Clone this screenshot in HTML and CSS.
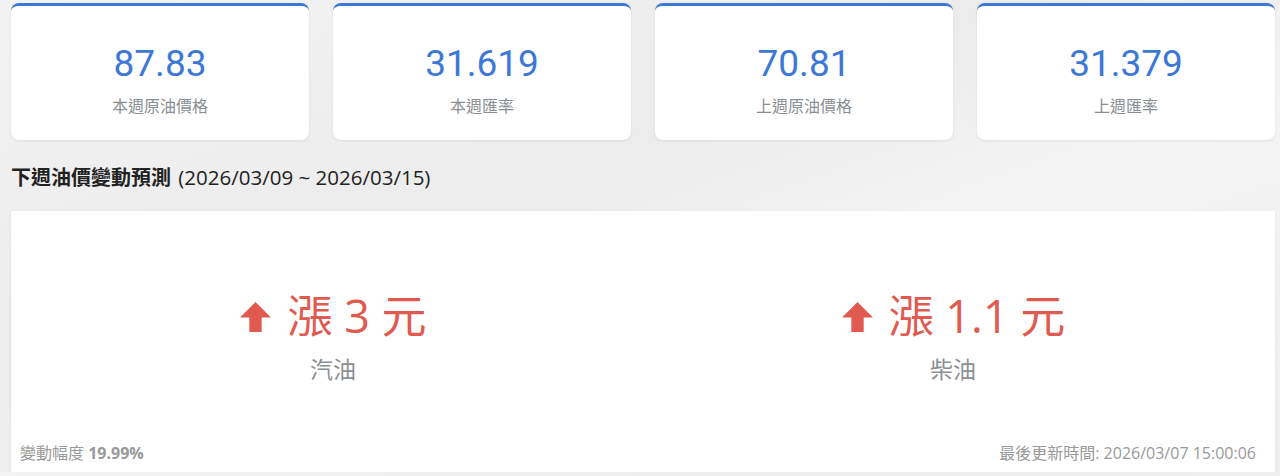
FILE: index.html
```html
<!DOCTYPE html>
<html lang="zh-Hant">
<head>
    <meta charset="UTF-8">
    <meta name="viewport" content="width=device-width, initial-scale=1.0">
    <title>油價預測</title>
    <link rel="stylesheet" href="styles.css">
</head>
<body>
    <div class="page">
        <div class="stats">
            <div class="stat-card">
                <div class="stat-value">87.83</div>
                <div class="stat-label">本週原油價格</div>
            </div>
            <div class="stat-card">
                <div class="stat-value">31.619</div>
                <div class="stat-label">本週匯率</div>
            </div>
            <div class="stat-card">
                <div class="stat-value">70.81</div>
                <div class="stat-label">上週原油價格</div>
            </div>
            <div class="stat-card">
                <div class="stat-value">31.379</div>
                <div class="stat-label">上週匯率</div>
            </div>
        </div>

        <h2 class="section-title"><strong>下週油價變動預測</strong> (2026/03/09 ~ 2026/03/15)</h2>

        <div class="forecast">
            <div class="forecast-body">
                <div class="forecast-item">
                    <div class="change up">
                        <svg class="arrow" viewBox="0 0 32 32"><path d="M16 2 L31 17 L22 17 L22 31 L10 31 L10 17 L1 17 Z"/></svg>
                        <span>漲 3 元</span>
                    </div>
                    <div class="fuel">汽油</div>
                </div>
                <div class="forecast-item">
                    <div class="change up">
                        <svg class="arrow" viewBox="0 0 32 32"><path d="M16 2 L31 17 L22 17 L22 31 L10 31 L10 17 L1 17 Z"/></svg>
                        <span>漲 1.1 元</span>
                    </div>
                    <div class="fuel">柴油</div>
                </div>
            </div>
            <div class="forecast-footer">
                <span>變動幅度 <b>19.99%</b></span>
                <span>最後更新時間: 2026/03/07 15:00:06</span>
            </div>
        </div>
    </div>
</body>
</html>
```

FILE: styles.css
```css
body {
    margin: 0;
    font-family: "Open Sans", "Noto Sans CJK TC", sans-serif;
    background: linear-gradient(160deg, #f3f3f3 0%, #ececec 40%, #f4f4f4 60%, #efefef 100%);
    color: #222;
}
.page {
    padding: 3px 5px 0 11px;
}
.stats {
    display: grid;
    grid-template-columns: repeat(4, 1fr);
    gap: 24px;
}
.stat-card {
    background: #fff;
    border-top: 3px solid #3d78d8;
    border-radius: 8px;
    box-shadow: 0 1px 3px rgba(0, 0, 0, 0.08);
    height: 137px;
    display: flex;
    flex-direction: column;
    align-items: center;
    padding-top: 34px;
    box-sizing: border-box;
}
.stat-value {
    font-family: Roboto, "Noto Sans CJK TC", sans-serif;
    font-size: 37px;
    line-height: 48px;
    color: #3d78d8;
}
.stat-label {
    margin-top: 5px;
    font-family: "Noto Sans CJK TC", sans-serif;
    font-size: 16px;
    color: #8a8f94;
}
.section-title {
    margin: 21px 0 18px;
    font-size: 20.5px;
    font-weight: normal;
    line-height: 32px;
    color: #222;
}
.section-title strong {
    font-family: "Noto Sans CJK TC", sans-serif;
    font-size: 20px;
    font-weight: bold;
    margin-right: 2px;
}
.forecast {
    background: #fff;
    box-shadow: 0 1px 3px rgba(0, 0, 0, 0.08);
    height: 261px;
    display: flex;
    flex-direction: column;
}
.forecast-body {
    flex: 1;
    display: grid;
    grid-template-columns: 1fr 1fr;
    align-items: center;
    padding: 22px 12px 0;
}
.forecast-item {
    display: flex;
    flex-direction: column;
    align-items: center;
}
.change {
    display: flex;
    align-items: center;
    gap: 15px;
    font-family: "Open Sans", "Noto Sans CJK TC", sans-serif;
    font-size: 45px;
    line-height: 56px;
}
.up {
    color: #e05a50;
}
.arrow {
    width: 33px;
    height: 33px;
    fill: #e05a50;
}
.fuel {
    margin-top: 7px;
    font-family: "Noto Sans CJK TC", sans-serif;
    font-size: 23px;
    color: #8a8f94;
}
.forecast-footer {
    display: flex;
    justify-content: space-between;
    padding: 0 19px 8px 9px;
    font-size: 16px;
    color: #999;
}
.forecast-footer b {
    font-weight: bold;
}
```
